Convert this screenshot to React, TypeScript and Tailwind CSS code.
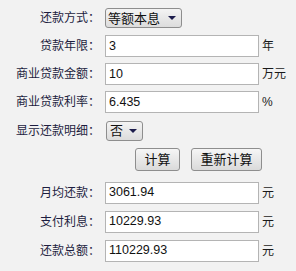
const font = { fontFamily: '"Liberation Sans", "Noto Sans CJK SC", sans-serif' };

function Arrow() {
    return (
        <svg width="8" height="4" viewBox="0 0 8 4" className="shrink-0">
            <path d="M0 0 L8 0 L4 4 Z" fill="#1c1c4c" />
        </svg>
    );
}

function Label({ text }: { text: string }) {
    return (
        <div className="w-[100px] text-right text-[12px] text-[#1d1d40] leading-none">
            {text}
        </div>
    );
}

function Field({ value }: { value: string }) {
    return (
        <div className="ml-[5px] w-[154px] h-[22px] bg-white border border-[#b4b4b4] flex items-center px-[3px] text-[12.5px] text-[#111] leading-none">
            {value}
        </div>
    );
}

function Unit({ text }: { text: string }) {
    return <div className="ml-[3px] text-[12px] text-[#1a1a1a] leading-none">{text}</div>;
}

export default function App() {
    const rows = [
        { label: '贷款年限：', value: '3', unit: '年' },
        { label: '商业贷款金额：', value: '10', unit: '万元' },
        { label: '商业贷款利率：', value: '6.435', unit: '%' },
    ];
    const results = [
        { label: '月均还款：', value: '3061.94' },
        { label: '支付利息：', value: '10229.93' },
        { label: '还款总额：', value: '110229.93' },
    ];

    return (
        <div className="w-[296px] h-[271px] bg-[#f2f2f2] pt-[4px]" style={font}>
            {/* 还款方式 */}
            <div className="flex items-center h-[28px]">
                <Label text="还款方式：" />
                <div className="ml-[5px] w-[77px] h-[20px] rounded-[3px] border border-[#8e8e8e] bg-gradient-to-b from-[#f4f4f4] to-[#dcdcdc] flex items-center pl-[2px] pr-[5px] justify-between">
                    <span className="text-[13px] text-[#111] leading-none">等额本息</span>
                    <Arrow />
                </div>
            </div>

            {rows.map(r => (
                <div className="flex items-center h-[28px]" key={r.label}>
                    <Label text={r.label} />
                    <Field value={r.value} />
                    <Unit text={r.unit} />
                </div>
            ))}

            {/* 显示还款明细 */}
            <div className="flex items-center h-[29px]">
                <Label text="显示还款明细：" />
                <div className="ml-[6px] w-[37px] h-[20px] rounded-[3px] border border-[#8e8e8e] bg-gradient-to-b from-[#f4f4f4] to-[#dcdcdc] flex items-center pl-[3px] pr-[5px] justify-between">
                    <span className="text-[13px] text-[#111] leading-none">否</span>
                    <Arrow />
                </div>
            </div>

            {/* 按钮 */}
            <div className="flex items-center h-[29px] pl-[135px] gap-[11px]">
                <button className="w-[45px] h-[23px] rounded-[3px] border border-[#8e8e8e] bg-gradient-to-b from-[#f6f6f6] to-[#dadada] text-[13px] text-[#111] leading-none">
                    计算
                </button>
                <button className="w-[71px] h-[23px] rounded-[3px] border border-[#8e8e8e] bg-gradient-to-b from-[#f6f6f6] to-[#dadada] text-[13px] text-[#111] leading-none">
                    重新计算
                </button>
            </div>

            <div className="mt-[4px]">
                {results.map(r => (
                    <div className="flex items-center h-[29px]" key={r.label}>
                        <Label text={r.label} />
                        <Field value={r.value} />
                        <Unit text="元" />
                    </div>
                ))}
            </div>
        </div>
    );
}
